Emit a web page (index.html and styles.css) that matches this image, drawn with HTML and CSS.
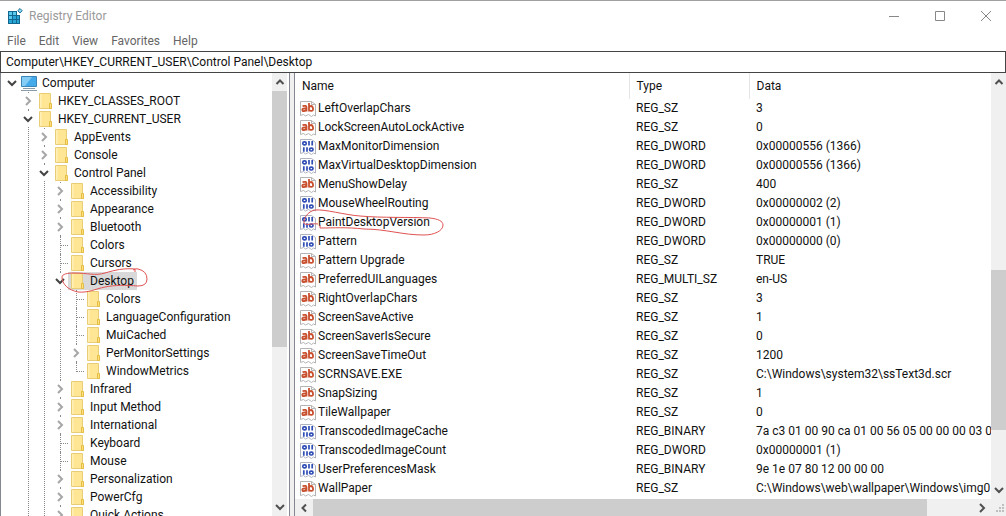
FILE: index.html
```
<!DOCTYPE html>
<html lang="en">
<head>
    <meta charset="UTF-8">
    <meta name="viewport" content="width=device-width, initial-scale=1.0">
    <title>Registry Editor</title>
    <link rel="stylesheet" href="styles.css">
</head>
<body>
    <svg class="sprites" aria-hidden="true">
        <symbol id="folder" viewBox="0 0 18 18">
            <path d="M3.500 1.500h11v11.500h1v3.500h-12z" fill="#ffe694" stroke="#e8cd76"/>
            <path d="M4 2h1.500v14h-1.500z" fill="#fff0b8"/>
            <path d="M13.500 11.500h2v5h-2z" fill="#ffe07a" stroke="#e3bd45"/>
        </symbol>
        <symbol id="computer" viewBox="0 0 18 18">
            <path d="M1.500 2.500h15v10h-15z" fill="#45aaea" stroke="#3b86b6"/>
            <path d="M2 3h10l-7 9h-3z" fill="#86cdf6"/>
            <path d="M3 14.500h12M1 16.500h16" stroke="#8a9ba8"/>
        </symbol>
        <symbol id="sz" viewBox="0 0 16 16">
            <path d="M.5.500h11l4 3v11.500l-2-1-2 1.500-3-2-3 1.500-2-1.500-3 1z" fill="#fff" stroke="#b4b4b4"/>
            <path d="M11.500.500v3h4" fill="none" stroke="#b4b4b4"/>
            <g fill="none" stroke="#c9502f" stroke-width="1.800">
                <path d="M2.500 5.200q4-1.200 4 1.300v4M6 7.500q-3.700-.3-3.700 1.300t1.700 1.200q2 0 2.300-1.500"/>
                <path d="M9 2v8.500M9 6.500q.5-1.500 2-1.500t2 2.500t-2 2.300-2-1.300"/>
            </g>
        </symbol>
        <symbol id="bin" viewBox="0 0 16 16">
            <path d="M.5.500h11l4 3v11.500l-2-1-2 1.500-3-2-3 1.500-2-1.500-3 1z" fill="#fff" stroke="#b0b4c0"/>
            <g fill="none" stroke="#2f4db5" stroke-width="1.700">
                <rect x="2.800" y="2.900" width="3.400" height="2.900" rx="1.400"/>
                <path d="M9 2v4.600M12.200 2v4.600M3.800 8.200v4.600M7 8.200v4.600"/>
                <rect x="9.600" y="9.100" width="3.400" height="2.900" rx="1.400"/>
            </g>
        </symbol>
        <symbol id="down" viewBox="0 0 16 16"><path d="M4 6l4 4 4-4" fill="none" stroke="currentColor" stroke-width="2"/></symbol>
        <symbol id="right" viewBox="0 0 16 16"><path d="M6 4l4 4-4 4" fill="none" stroke="currentColor" stroke-width="2"/></symbol>
        <symbol id="up" viewBox="0 0 16 16"><path d="M4.500 10l3.500-3.500 3.500 3.500" fill="none" stroke="currentColor" stroke-width="2"/></symbol>
        <symbol id="left" viewBox="0 0 16 16"><path d="M10 4.500l-3.500 3.500 3.500 3.500" fill="none" stroke="currentColor" stroke-width="2"/></symbol>
    </svg>

    <header class="titlebar">
        <svg class="logo" viewBox="0 0 16 16" aria-hidden="true">
            <path d="M1 3h9v4h3v9h-12z" fill="#12678f"/>
            <path d="M2 4h3v3h-3zM6 4h3v3h-3zM2 8h3v3h-3z" fill="#5cc9ee"/>
            <path d="M6 8h3v3h-3zM2 12h3v3h-3zM6 12h3v3h-3zM10 8h2v3h-2zM10 12h2v3h-2z" fill="#2aa5d8"/>
            <path d="M13 .500l2.200 2.200-2.200 2.200-2.200-2.200z" fill="#8fdaf3" stroke="#12678f"/>
        </svg>
        <h1>Registry Editor</h1>
        <div class="window-buttons">
            <button aria-label="Minimize"><svg viewBox="0 0 10 10"><path d="M0 5.500h10"/></svg></button>
            <button aria-label="Maximize"><svg viewBox="0 0 10 10"><path d="M.5.500h9v9h-9z"/></svg></button>
            <button aria-label="Close"><svg viewBox="0 0 10 10"><path d="M0 0l10 10M10 0l-10 10"/></svg></button>
        </div>
    </header>

    <nav class="menu">
        <button>File</button>
        <button>Edit</button>
        <button>View</button>
        <button>Favorites</button>
        <button>Help</button>
    </nav>

    <input class="address" type="text" aria-label="Address" value="Computer\HKEY_CURRENT_USER\Control Panel\Desktop">

    <main class="panes">
        <section class="tree-pane">
            <div class="tree">
                <ul id="tree"></ul>
            </div>
            <div class="scroll vertical tree-scroll">
                <button aria-label="Scroll up"><svg><use href="#up"/></svg></button>
                <div class="track"><div class="thumb"></div></div>
                <button aria-label="Scroll down"><svg><use href="#down"/></svg></button>
            </div>
        </section>

        <section class="value-pane">
            <div class="values">
                <table>
                    <thead>
                        <tr><th class="name">Name</th><th class="type">Type</th><th>Data</th></tr>
                    </thead>
                    <tbody id="values"></tbody>
                </table>
            </div>
            <div class="scroll vertical value-scroll">
                <button aria-label="Scroll up"><svg><use href="#up"/></svg></button>
                <div class="track"><div class="thumb"></div></div>
                <button aria-label="Scroll down"><svg><use href="#down"/></svg></button>
            </div>
            <div class="scroll horizontal">
                <button aria-label="Scroll left"><svg><use href="#left"/></svg></button>
                <div class="track"><div class="thumb"></div></div>
                <button aria-label="Scroll right"><svg><use href="#right"/></svg></button>
            </div>
            <svg class="grip" viewBox="0 0 15 17" aria-hidden="true">
                <path d="M11 5h2v2h-2zM8 8h2v2h-2zM11 8h2v2h-2zM5 11h2v2h-2zM8 11h2v2h-2zM11 11h2v2h-2z" fill="#bfbfbf"/>
            </svg>
        </section>
    </main>

    <script src="script.js"></script>
</body>
</html>
```

FILE: styles.css
```
* {
    box-sizing: border-box;
}

body {
    margin: 0;
    height: 100vh;
    display: flex;
    flex-direction: column;
    overflow: hidden;
    border-top: 1px solid #a0a0a0;
    background-color: #fff;
    color: #111;
    font-family: Roboto, "Open Sans", sans-serif;
    font-size: 12px;
}

button, input {
    font: inherit;
    color: inherit;
    border: none;
    background: none;
    padding: 0;
}

svg {
    display: block;
}

ul {
    list-style: none;
    margin: 0;
    padding: 0;
}

.sprites {
    position: absolute;
    width: 0;
    height: 0;
}

/* title bar and menu */
.titlebar {
    display: flex;
    align-items: center;
    height: 30px;
    padding-left: 7px;
    color: #999;
}

.logo {
    width: 16px;
    height: 16px;
    margin-right: 6px;
}

.titlebar h1 {
    margin: 0;
    font-size: 12px;
    font-weight: normal;
}

.window-buttons {
    display: flex;
    margin-left: auto;
    margin-right: -3px;
}

.window-buttons button {
    display: flex;
    justify-content: center;
    align-items: center;
    width: 46px;
    height: 30px;
}

.window-buttons svg {
    width: 10px;
    height: 10px;
    fill: none;
    stroke: #888;
}

.menu {
    display: flex;
    gap: 13px;
    height: 20px;
    padding-left: 7px;
    color: #666;
}

.address {
    width: 100%;
    height: 22px;
    flex: none;
    padding: 0 5px;
    border: 1px solid #444;
    outline: none;
}

/* panes */
.panes {
    flex: 1;
    min-height: 0;
    display: flex;
    gap: 4px;
    background-color: #f0f0f0;
}

.tree-pane {
    display: flex;
    width: 290px;
    flex: none;
    padding-right: 2px;
    border-left: 1px solid #828790;
    border-right: 1px solid #828790;
    background-color: #fff;
}

.tree {
    flex: 1;
    overflow: hidden;
    padding: 1px 0 0 3px;
}

.tree li {
    position: relative;
}

.tree li ul {
    padding-left: 16px;
}

/* dotted guide lines */
.tree li li::before {
    content: "";
    position: absolute;
    top: 0;
    bottom: 0;
    left: 8px;
    border-left: 1px dotted #888;
}

.tree li li.last::before {
    bottom: auto;
    height: 10px;
}

.tree li li.leaf > .key::before {
    content: "";
    position: absolute;
    top: 9px;
    left: 8px;
    width: 8px;
    border-top: 1px dotted #888;
}

.key {
    display: flex;
    height: 18px;
    line-height: 18px;
    white-space: nowrap;
}

.toggle {
    position: relative;
    display: flex;
    align-items: center;
    width: 16px;
    height: 18px;
    color: #a6a6a6;
}

.toggle svg {
    width: 16px;
    height: 16px;
    background-color: #fff;
}

.toggle.open {
    color: #444;
}

.leaf .toggle {
    visibility: hidden;
}

.item {
    display: flex;
    gap: 4px;
    padding-right: 3px;
}

.item svg {
    width: 18px;
    height: 18px;
}

.selected .item {
    background-color: #d9d9d9;
}

.value-pane {
    flex: 1;
    min-width: 0;
    display: grid;
    grid-template-columns: 1fr 15px;
    grid-template-rows: 1fr 17px;
    border-left: 1px solid #828790;
    background-color: #fff;
}

.values {
    overflow: hidden;
}

.values table {
    width: 100%;
    table-layout: fixed;
    border-collapse: collapse;
}

.values th {
    height: 26px;
    padding: 0 7px;
    font-weight: normal;
    text-align: left;
    border-right: 1px solid #e5e5e5;
}

.values th:last-child {
    border-right: none;
}

.values td {
    height: 19px;
    line-height: 19px;
    padding: 0 0 0 7px;
    white-space: nowrap;
    overflow: hidden;
}

.values .name {
    width: 334px;
}

.values .type {
    width: 120px;
}

.values td:first-child {
    padding-left: 5px;
    overflow: visible;
}

.value {
    position: relative;
    display: flex;
    align-items: center;
    gap: 2px;
}

.value svg.icon {
    width: 16px;
    height: 16px;
}

/* scroll bars */
.scroll {
    display: flex;
    background-color: #f0f0f0;
    color: #505050;
}

.scroll button {
    display: flex;
    align-items: center;
    justify-content: center;
}

.scroll svg {
    width: 16px;
    height: 16px;
    flex: none;
}

.scroll .track {
    flex: 1;
    display: flex;
}

.scroll .thumb {
    background-color: #cdcdcd;
}

.vertical,
.vertical .track {
    flex-direction: column;
}

.vertical {
    width: 15px;
}

.vertical button {
    height: 18px;
}

.horizontal button {
    width: 18px;
}

.tree-scroll .thumb {
    height: 63%;
}

.value-scroll .track {
    justify-content: flex-end;
}

.value-scroll .thumb {
    height: 41%;
    margin-bottom: 51px;
}

.horizontal .thumb {
    width: 93%;
}

.grip {
    width: 15px;
    height: 17px;
    background-color: #f0f0f0;
}

/* red pen marks drawn over the rows */
.mark {
    position: absolute;
    fill: none;
    stroke: #e05252;
    z-index: 1;
}

.mark-key {
    top: -6px;
    left: 8px;
    width: 92px;
    height: 30px;
}

.mark-value {
    top: -8px;
    left: 0;
    width: 150px;
    height: 32px;
}
```

FILE: script.js
```
// [name, children] - a key without children is a leaf
var keys = ["Computer", [
    ["HKEY_CLASSES_ROOT", []],
    ["HKEY_CURRENT_USER", [
        ["AppEvents", []],
        ["Console", []],
        ["Control Panel", [
            ["Accessibility", []],
            ["Appearance", []],
            ["Bluetooth", []],
            ["Colors"],
            ["Cursors"],
            ["Desktop", [
                ["Colors"],
                ["LanguageConfiguration"],
                ["MuiCached"],
                ["PerMonitorSettings", []],
                ["WindowMetrics"]
            ]],
            ["Infrared", []],
            ["Input Method", []],
            ["International", []],
            ["Keyboard"],
            ["Mouse"],
            ["Personalization", []],
            ["PowerCfg", []],
            ["Quick Actions", []]
        ]]
    ]]
]];

var values = [
    ["LeftOverlapChars", "REG_SZ", "3"],
    ["LockScreenAutoLockActive", "REG_SZ", "0"],
    ["MaxMonitorDimension", "REG_DWORD", "0x00000556 (1366)"],
    ["MaxVirtualDesktopDimension", "REG_DWORD", "0x00000556 (1366)"],
    ["MenuShowDelay", "REG_SZ", "400"],
    ["MouseWheelRouting", "REG_DWORD", "0x00000002 (2)"],
    ["PaintDesktopVersion", "REG_DWORD", "0x00000001 (1)"],
    ["Pattern", "REG_DWORD", "0x00000000 (0)"],
    ["Pattern Upgrade", "REG_SZ", "TRUE"],
    ["PreferredUILanguages", "REG_MULTI_SZ", "en-US"],
    ["RightOverlapChars", "REG_SZ", "3"],
    ["ScreenSaveActive", "REG_SZ", "1"],
    ["ScreenSaverIsSecure", "REG_SZ", "0"],
    ["ScreenSaveTimeOut", "REG_SZ", "1200"],
    ["SCRNSAVE.EXE", "REG_SZ", "C:\\Windows\\system32\\ssText3d.scr"],
    ["SnapSizing", "REG_SZ", "1"],
    ["TileWallpaper", "REG_SZ", "0"],
    ["TranscodedImageCache", "REG_BINARY", "7a c3 01 00 90 ca 01 00 56 05 00 00 00 03 00 00"],
    ["TranscodedImageCount", "REG_DWORD", "0x00000001 (1)"],
    ["UserPreferencesMask", "REG_BINARY", "9e 1e 07 80 12 00 00 00"],
    ["WallPaper", "REG_SZ", "C:\\Windows\\web\\wallpaper\\Windows\\img0"]
];

var keyMark = '<svg class="mark mark-key" viewBox="0 0 92 30"><path d="M73 4q3-2 5-1q9 2 9 10q0 7-9 7C65 19 55 19 45 21S28 27 18 26C8 24 2 18 2 11C2 8 8 7 14 7C28 7 35 10 45 7C55 4 64 2 75 3v3"/></svg>';
var valueMark = '<svg class="mark mark-value" viewBox="0 0 150 32"><path d="M18 19c-6-1-13 2-14-1-1-4 4-12 11-13 10-1 30 5 45 6 22 2 50 1 70 2 8 1 13 3 13 7 0 6-9 10-19 10-22 0-38-6-60-6-18-2-30-1-44-1v-3"/></svg>';

function keyHtml(key, level, last) {
    var name = key[0];
    var children = key[1];
    var open = children && children.length > 0;
    var selected = name == "Desktop";
    var html = '<li class="' + (children ? '' : 'leaf ') + (last ? 'last ' : '') + '">';
    html += '<div class="key' + (selected ? ' selected' : '') + '">';
    html += '<button class="toggle' + (open ? ' open' : '') + '" aria-label="Toggle ' + name + '">';
    html += '<svg><use href="#' + (open ? 'down' : 'right') + '"/></svg></button>';
    html += '<span class="item"><svg><use href="#' + (level == 0 ? 'computer' : 'folder') + '"/></svg>' + name + '</span>';
    html += (selected ? keyMark : '') + '</div>';
    if (open) {
        html += '<ul>';
        for (var i = 0; i < children.length; i++) {
            html += keyHtml(children[i], level + 1, level == 3 && i == children.length - 1);
        }
        html += '</ul>';
    }
    return html + '</li>';
}

document.getElementById("tree").innerHTML = keyHtml(keys, 0, false);

var rows = "";
for (var i = 0; i < values.length; i++) {
    var v = values[i];
    var icon = v[1].indexOf("SZ") > -1 ? "sz" : "bin";
    rows += '<tr><td><div class="value"><svg class="icon" viewBox="0 0 16 16"><use href="#' + icon + '"/></svg>' + v[0];
    rows += (v[0] == "PaintDesktopVersion" ? valueMark : '') + '</div></td>';
    rows += '<td>' + v[1] + '</td><td>' + v[2] + '</td></tr>';
}
document.getElementById("values").innerHTML = rows;
```
